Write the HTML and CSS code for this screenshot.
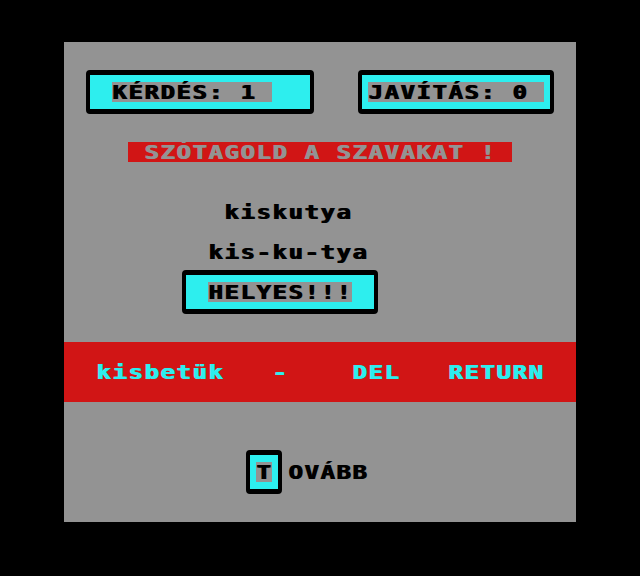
FILE: index.html
```html
<!DOCTYPE html>
<html lang="hu">
<head>
<meta charset="utf-8">
<title>Szótagolás</title>
<link rel="stylesheet" href="styles.css">
</head>
<body>
<div class="screen">
  <div class="frame f-kerdes"></div>
  <div class="label l-kerdes"><span class="ch">KÉRDÉS: 1</span></div>
  <div class="frame f-javitas"></div>
  <div class="label l-javitas"><span class="ch">JAVÍTÁS: 0</span></div>
  <div class="banner"><span class="ch">SZÓTAGOLD A SZAVAKAT !</span></div>
  <div class="word w-szo"><span class="ch">kiskutya</span></div>
  <div class="word w-bontas"><span class="ch">kis-ku-tya</span></div>
  <div class="frame f-helyes"></div>
  <div class="label l-helyes"><span class="ch">HELYES!!!</span></div>
  <div class="band">
    <div class="key k-kis"><span class="ch">kisbetük</span></div>
    <div class="key k-minus"><span class="ch">-</span></div>
    <div class="key k-del"><span class="ch">DEL</span></div>
    <div class="key k-ret"><span class="ch">RETURN</span></div>
  </div>
  <div class="frame f-tovabb"></div>
  <div class="label l-tovabb"><span class="ch">T</span></div>
  <div class="word w-tovabb"><span class="ch">OVÁBB</span></div>
</div>
</body>
</html>
```
FILE: styles.css
```css
html, body {
  margin: 0;
  padding: 0;
  background: #000000;
}
body {
  width: 640px;
  height: 576px;
  overflow: hidden;
  font-family: "DejaVu Sans Mono", "Liberation Mono", monospace;
  font-weight: bold;
  font-size: 20px;
  line-height: 20px;
}
.screen {
  margin: 42px 0 0 64px;
  width: 512px;
  height: 480px;
  background: #939393;
  display: grid;
  grid-template-columns: repeat(32, 16px);
  grid-template-rows: repeat(24, 20px);
}
.ch {
  display: inline-block;
  white-space: pre;
  letter-spacing: 1.29px;
  transform: scaleX(1.2);
  transform-origin: left top;
  text-shadow: 1px 0 0 currentColor;
}
.frame {
  background: #2deeee;
  border: 4px solid #000000;
  border-top-width: 5px;
  border-bottom-width: 5px;
  border-radius: 4px;
  margin: 8px 6px;
}
.label {
  background: #939393;
  color: #000000;
  white-space: pre;
}
.word {
  color: #000000;
  white-space: pre;
}
.f-kerdes { grid-column: 2 / 17; grid-row: 2 / 5; }
.l-kerdes { grid-column: 4 / 14; grid-row: 3; }
.f-javitas { grid-column: 19 / 32; grid-row: 2 / 5; }
.l-javitas { grid-column: 20 / 31; grid-row: 3; }
.banner {
  grid-column: 5 / 29;
  grid-row: 6;
  background: #d11515;
  color: #939393;
  padding-left: 16px;
  white-space: pre;
}
.w-szo { grid-column: 11 / 19; grid-row: 9; }
.w-bontas { grid-column: 10 / 20; grid-row: 11; }
.f-helyes { grid-column: 8 / 21; grid-row: 12 / 15; }
.l-helyes { grid-column: 10 / 19; grid-row: 13; }
.band {
  grid-column: 1 / -1;
  grid-row: 16 / 19;
  background: #d11515;
  color: #2deeee;
  display: grid;
  grid-template-columns: repeat(32, 16px);
  grid-template-rows: repeat(3, 20px);
}
.key { grid-row: 2; white-space: pre; }
.k-kis { grid-column: 3 / 11; }
.k-minus { grid-column: 14; }
.k-del { grid-column: 19 / 22; }
.k-ret { grid-column: 25 / 31; }
.f-tovabb { grid-column: 12 / 15; grid-row: 21 / 24; }
.l-tovabb { grid-column: 13; grid-row: 22; }
.w-tovabb { grid-column: 15 / 20; grid-row: 22; }
```
